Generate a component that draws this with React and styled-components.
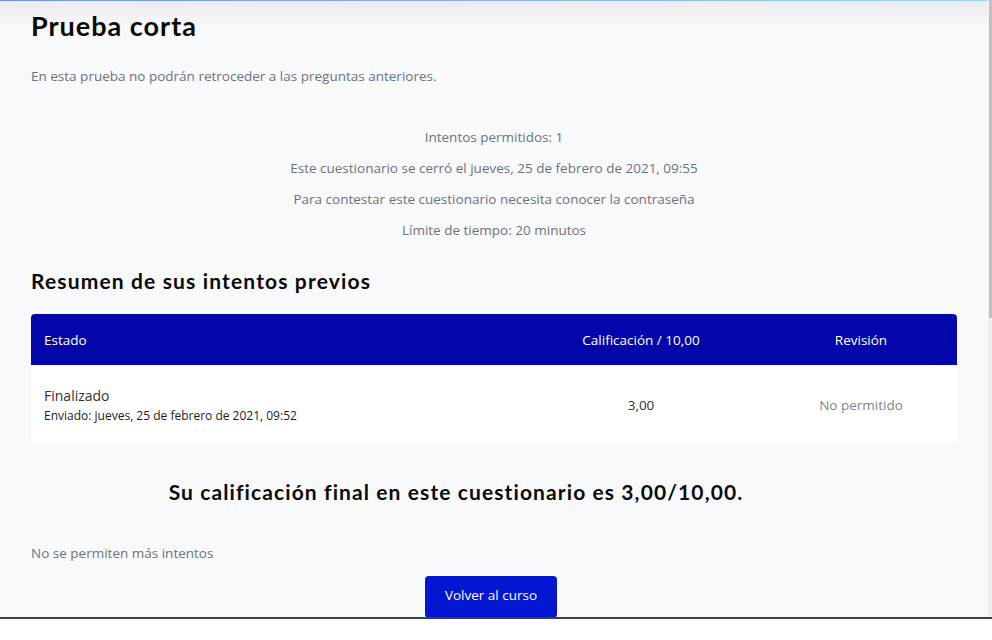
import React from "react";
import styled, { createGlobalStyle } from "styled-components";

const attempts = [
  {
    state: "Finalizado",
    sent: "Enviado: jueves, 25 de febrero de 2021, 09:52",
    grade: "3,00",
    review: "No permitido",
  },
];

const info = [
  "Intentos permitidos: 1",
  "Este cuestionario se cerró el jueves, 25 de febrero de 2021, 09:55",
  "Para contestar este cuestionario necesita conocer la contraseña",
  "Límite de tiempo: 20 minutos",
];

const App = () => (
  <>
    <GlobalStyle />
    <Viewport>
      <TopLine />
      <Page>
        <Title>Prueba corta</Title>
        <Intro>En esta prueba no podrán retroceder a las preguntas anteriores.</Intro>
        <InfoBox>
          {info.map(line => (
            <InfoLine key={line}>{line}</InfoLine>
          ))}
        </InfoBox>
        <SectionTitle>Resumen de sus intentos previos</SectionTitle>
        <Table>
          <HeadRow>
            <Cell>Estado</Cell>
            <Cell center>Calificación / 10,00</Cell>
            <Cell center>Revisión</Cell>
          </HeadRow>
          {attempts.map(a => (
            <BodyRow key={a.sent}>
              <Cell>
                <StateText>{a.state}</StateText>
                <SentText>{a.sent}</SentText>
              </Cell>
              <Cell center>{a.grade}</Cell>
              <Cell center muted>{a.review}</Cell>
            </BodyRow>
          ))}
        </Table>
        <FinalGrade>Su calificación final en este cuestionario es 3,00/10,00.</FinalGrade>
        <Note>No se permiten más intentos</Note>
        <ButtonRow>
          <Button>Volver al curso</Button>
        </ButtonRow>
      </Page>
      <Scrollbar>
        <Thumb />
      </Scrollbar>
    </Viewport>
    <Footer />
  </>
);

const GlobalStyle = createGlobalStyle`
  body {
    margin: 0;
    background: #ffffff;
    font-family: "Open Sans", "Liberation Sans", sans-serif;
    font-size: 13.5px;
    line-height: 21px;
  }
  * { box-sizing: border-box; }
`;

const Viewport = styled.div`
  position: relative;
  height: 617px;
  overflow: hidden;
  background: #f8f9fb;
`;

const TopLine = styled.div`
  height: 1px;
  background: linear-gradient(90deg, #6d97d9 0%, #86b4ea 50%, #9dd3fb 100%);
  & + * {
    background: linear-gradient(180deg, #ececed 0px, #f8f9fb 26px);
  }
`;

const Page = styled.main`
  padding: 9px 35px 0 31px;
  height: 616px;
`;

const headingFont = `
  font-family: Lato, "Liberation Sans", sans-serif;
  font-weight: 700;
  color: #0a0a0a;
`;

const Title = styled.h1`
  ${headingFont}
  margin: 0;
  font-size: 27px;
  line-height: 32px;
  letter-spacing: 1px;
`;

const Intro = styled.p`
  margin: 24px 0 0;
  color: #6c737b;
`;

const InfoBox = styled.div`
  margin-top: 40px;
  display: flex;
  flex-direction: column;
  align-items: center;
  gap: 10px;
`;

const InfoLine = styled.p`
  margin: 0;
  color: #6c737b;
`;

const SectionTitle = styled.h2`
  ${headingFont}
  margin: 28px 0 0;
  font-size: 21px;
  line-height: 24px;
  letter-spacing: 1.15px;
`;

const Table = styled.div`
  margin-top: 21px;
  display: grid;
  grid-template-columns: 486px 248px 1fr;
`;

const HeadRow = styled.div`
  display: contents;
  & > div {
    background: #0307aa;
    color: #ffffff;
    height: 51px;
  }
  & > div:first-child { border-top-left-radius: 4px; }
  & > div:last-child { border-top-right-radius: 4px; }
`;

const BodyRow = styled.div`
  display: contents;
  & > div {
    background: #ffffff;
    height: 78px;
    color: #333;
  }
`;

const Cell = styled.div`
  display: flex;
  flex-direction: column;
  justify-content: center;
  align-items: ${p => (p.center ? "center" : "flex-start")};
  padding: 2px 13px 0;
  ${p => p.muted && "color: #80868c !important;"}
`;

const StateText = styled.span`
  color: #333;
  font-size: 14px;
  line-height: 20px;
`;

const SentText = styled.span`
  font-size: 12px;
  line-height: 19px;
  color: #1d1d1d;
`;

const FinalGrade = styled.h3`
  ${headingFont}
  margin: 37px 0 0;
  padding-right: 76px;
  text-align: center;
  font-size: 21px;
  line-height: 24px;
  letter-spacing: 1.1px;
`;

const Note = styled.p`
  margin: 39px 0 0;
  color: #6c737b;
`;

const ButtonRow = styled.div`
  margin-top: 12px;
  display: flex;
  justify-content: center;
  padding-right: 6px;
`;

const Button = styled.button`
  width: 132px;
  height: 42px;
  border: none;
  border-radius: 4px;
  background: #0416cf;
  color: #ffffff;
  font-family: "Open Sans", "Liberation Sans", sans-serif;
  font-size: 13.5px;
  padding: 0 0 4px;
`;

const Scrollbar = styled.div`
  position: absolute;
  top: 0;
  right: 0;
  bottom: 0;
  width: 4px;
  background: #efefef;
`;

const Thumb = styled.div`
  margin-left: 1px;
  width: 3px;
  height: 318px;
  background: #c1c1c1;
`;

const Footer = styled.div`
  height: 2px;
  background: #3d414a;
`;

export default App;
